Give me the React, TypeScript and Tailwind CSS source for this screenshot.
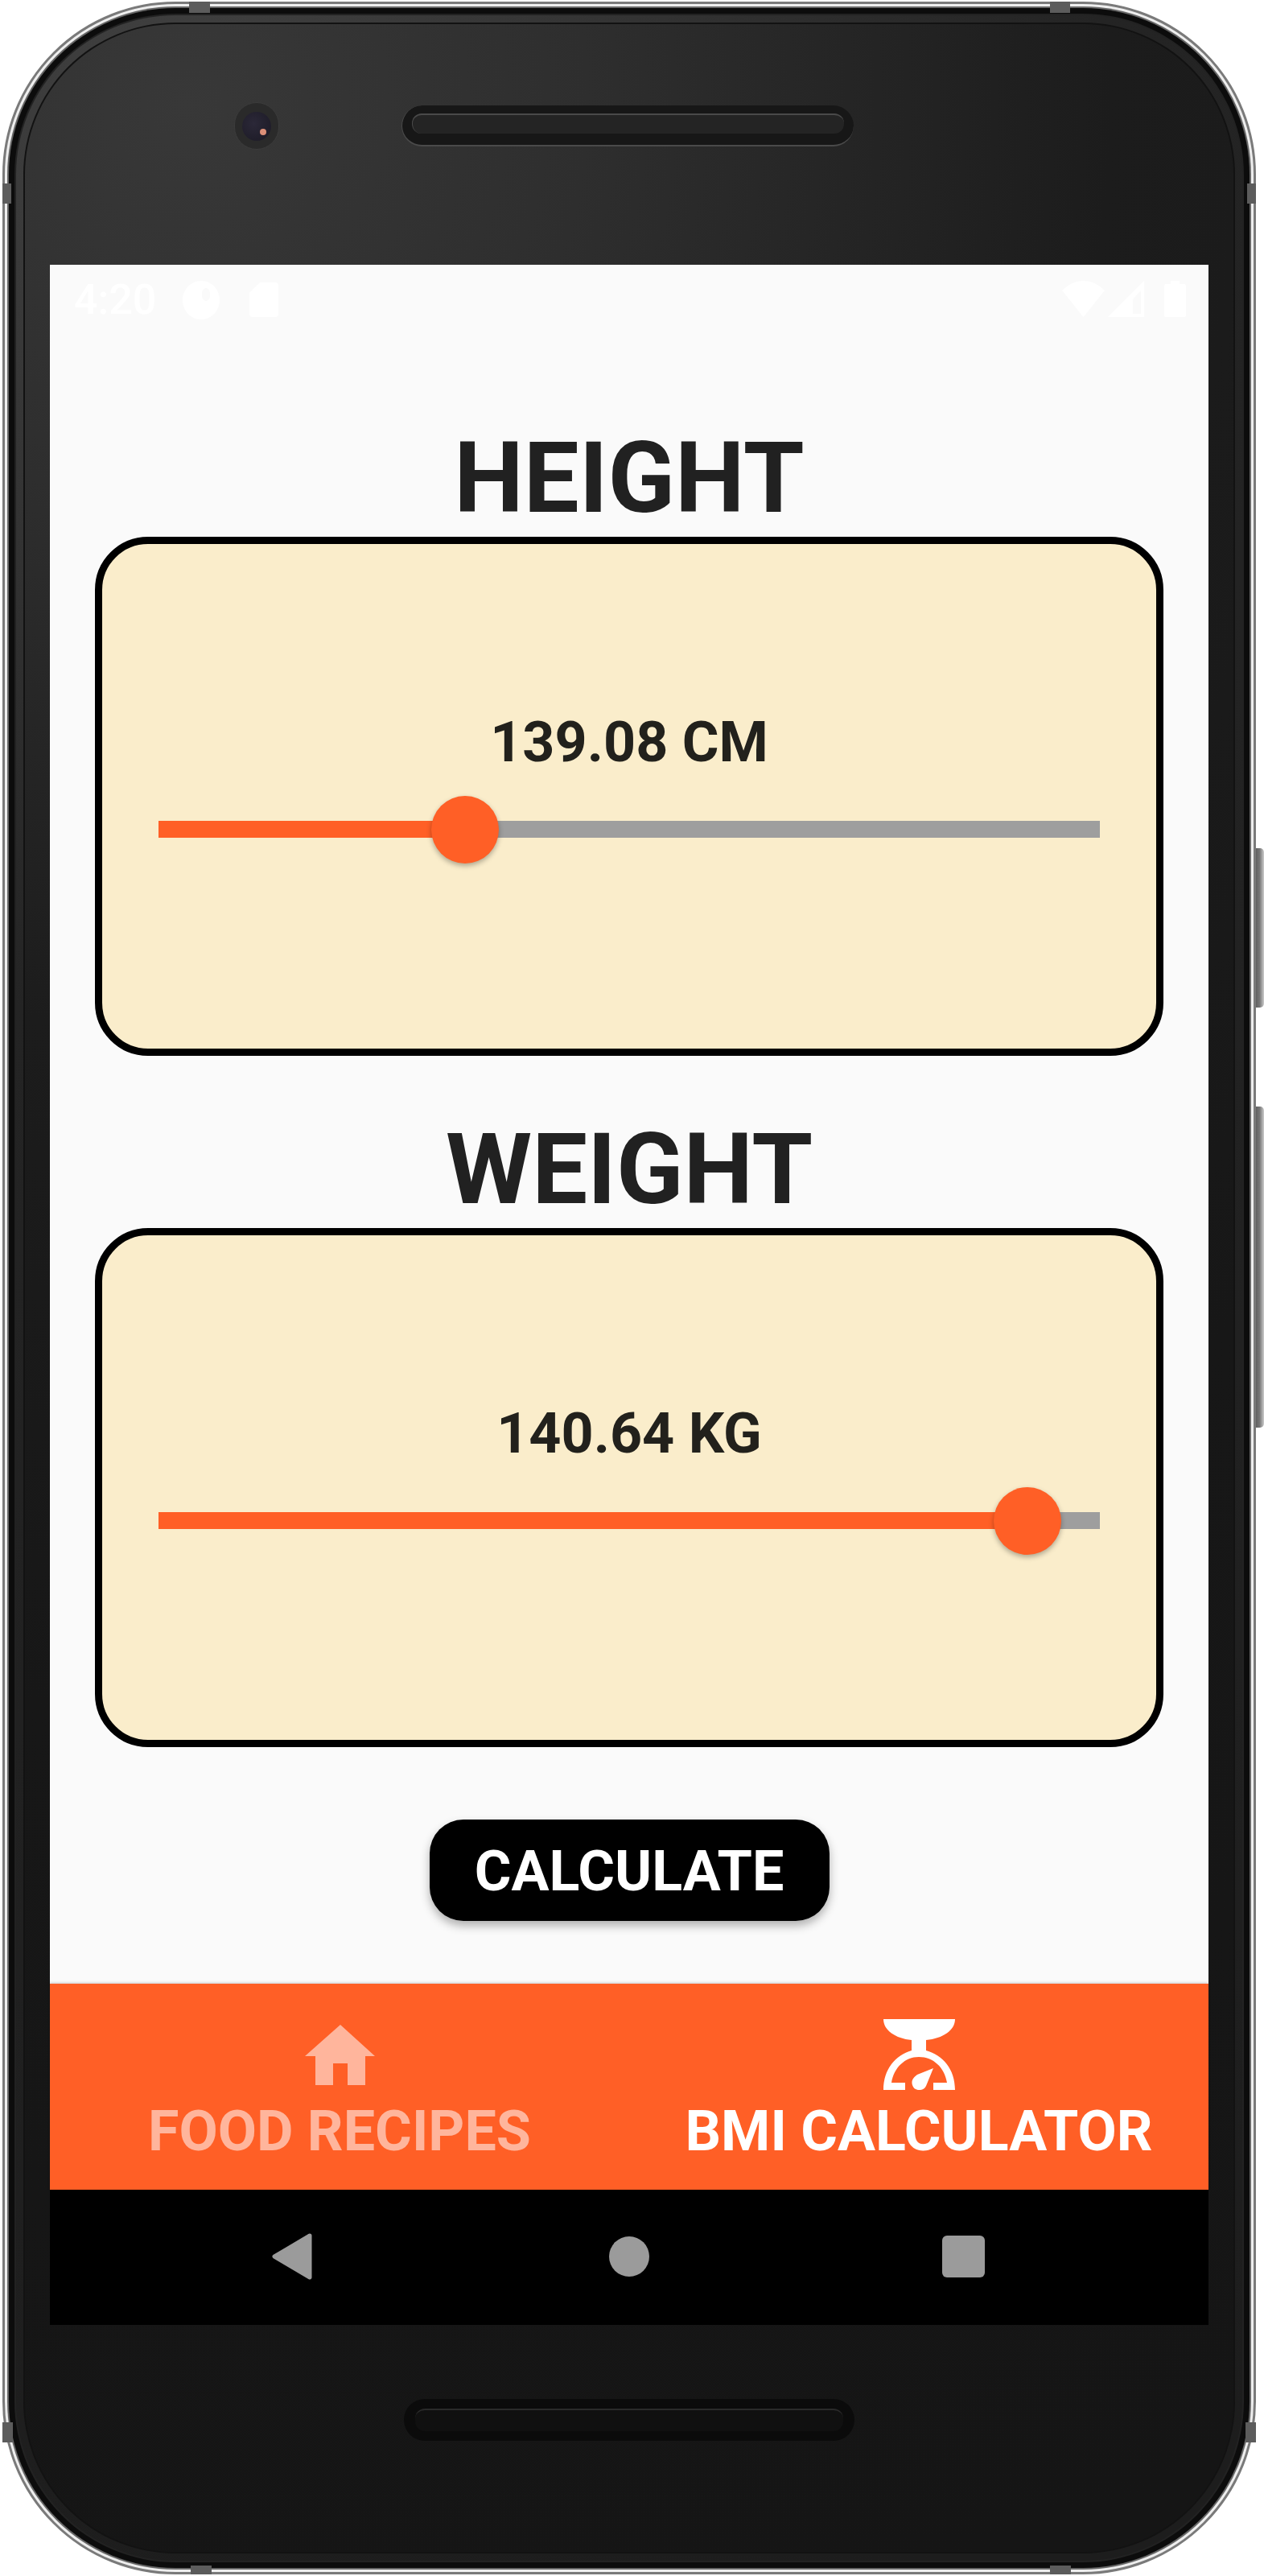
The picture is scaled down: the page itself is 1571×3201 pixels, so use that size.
const roboto = "font-['Roboto',sans-serif]";

function Slider({ percent }: { percent: number }) {
  return (
    <div className="relative mt-[57px] h-[21px] w-full bg-[#9e9e9e]">
      <div className="h-full bg-[#ff5f26]" style={{ width: `${percent}%` }} />
      <div
        className="absolute top-[-31.5px] ml-[-42px] h-[84px] w-[84px] rounded-full bg-[#ff5f26] shadow-[0_3px_6px_rgba(0,0,0,0.3)]"
        style={{ left: `${percent}%` }}
      />
    </div>
  );
}

function MeasureCard(props: { title: string; value: string; percent: number; className?: string }) {
  const { title, value, percent, className } = props;
  return (
    <div className={`flex w-full flex-col items-center ${className ?? ""}`}>
      <h2 className="h-[143px] text-[122.5px] leading-[143px] font-bold text-[#212121]">{title}</h2>
      <div className="mt-px flex h-[645px] w-full flex-col items-center rounded-[66px] border-[9px] border-black bg-[#faedcb] px-[70px] pt-[205px]">
        <div className="text-[70px] leading-[82px] font-bold text-[#22211c]">{value}</div>
        <Slider percent={percent} />
      </div>
    </div>
  );
}

function StatusBar() {
  return (
    <div className="flex h-[84px] shrink-0 items-center pr-[28px] pl-[30px] text-white">
      <span className="mt-[3px] w-[92px] text-[52px] leading-[60px] font-medium">4:20</span>
      <svg className="mt-[3px] ml-[43px]" width="46" height="48" viewBox="0 0 46 48" fill="currentColor">
        <path fillRule="evenodd" d="M23 0c13 0 23 11 23 24S36 48 23 48 0 37 0 24 10 0 23 0Zm6 9a5 6 0 0 0-5 6v4a5 6 0 0 0 10 0v-4a5 6 0 0 0-5-6Z" />
      </svg>
      <svg className="mt-[3px] ml-[37px]" width="36" height="43" viewBox="0 0 36 43" fill="currentColor">
        <path d="M13 0h19a4 4 0 0 1 4 4v35a4 4 0 0 1-4 4H4a4 4 0 0 1-4-4V13Z" />
      </svg>
      <div className="ml-auto flex items-center">
        <svg width="53" height="45" viewBox="0 0 53 45" fill="currentColor">
          <path d="M26.5 45 0 12C8 4 17 0 26.5 0S45 4 53 12Z" />
        </svg>
        <svg className="ml-[4px]" width="45" height="45" viewBox="0 0 45 45" fill="currentColor">
          <path fillRule="evenodd" d="M45 0v45H0Zm-4 12L31 23v18h10Z" />
        </svg>
        <svg className="ml-[25px]" width="27" height="45" viewBox="0 0 27 45" fill="currentColor">
          <path d="M8 0h11v4h6a2 2 0 0 1 2 2v37a2 2 0 0 1-2 2H2a2 2 0 0 1-2-2V6a2 2 0 0 1 2-2h6Z" />
        </svg>
      </div>
    </div>
  );
}

function HomeIcon() {
  return (
    <svg width="87" height="75" viewBox="0 0 87 75" fill="currentColor">
      <path d="M44 0 87 39H75V75H53V48H35V75H13V39H0Z" />
    </svg>
  );
}

function ScaleIcon() {
  return (
    <svg width="89" height="88" viewBox="0 0 89 88" fill="currentColor">
      <path d="M0 0H89C89 14 74 24 53 26V39C74 45 89 62 89 88H62V79H79C76 60 62 47 44 47 27 47 13 60 10 79H27V88H0C0 62 15 45 35 39V26C15 24 0 14 0 0Z" />
      <path d="M62 61 53 83C50 90 38 90 36 82 34 76 38 72 42 69Z" />
    </svg>
  );
}

function TabItem(props: { label: string; active?: boolean; children: React.ReactNode }) {
  const { label, active, children } = props;
  return (
    <div className={`flex flex-1 flex-col items-center pt-[44px] ${active ? "text-white" : "text-[#ffb59c]"}`}>
      <div className="flex h-[88px] items-center justify-center">{children}</div>
      <span className="mt-[10px] text-[70px] leading-[82px] font-bold whitespace-nowrap">{label}</span>
    </div>
  );
}

function NavBar() {
  return (
    <div className="flex h-[168px] shrink-0 items-center bg-black pb-[2px] pl-[274px]">
      <svg width="56" height="58" viewBox="0 0 56 58" fill="#9b9b9b">
        <path d="M49 3 5 29 49 55Z" stroke="#9b9b9b" strokeWidth="5" strokeLinejoin="round" />
      </svg>
      <div className="ml-[365px] h-[50px] w-[50px] rounded-full bg-[#9b9b9b]" />
      <div className="ml-[364px] h-[52px] w-[53px] rounded-[6px] bg-[#9b9b9b]" />
    </div>
  );
}

function Speaker({ bottom }: { bottom?: boolean }) {
  if (bottom) {
    return (
      <div className="flex h-[52px] w-[560px] items-center rounded-[26px] bg-[#0b0b0b] px-[14px]">
        <div className="h-[28px] w-full rounded-[12px] border-t-2 border-[#2a2a2a] bg-[#101010]" />
      </div>
    );
  }
  return (
    <div className="flex h-[51px] w-[562px] items-center rounded-[26px] border-b-2 border-l border-[#4a4a4a] bg-[#171717] px-[12px] pb-[4px]">
      <div className="h-[25px] w-full rounded-[12px] border-t-2 border-l border-[#4a4a4a] bg-[#242424]" />
    </div>
  );
}

function Camera() {
  return (
    <div className="relative flex h-[59px] w-[56px] shrink-0 items-center justify-center rounded-full border border-[#3c3c3c] bg-[#2a2a2a]">
      <div className="relative h-[36px] w-[36px] rounded-full bg-[radial-gradient(circle_at_40%_40%,#2b2838,#1b1924)]">
        <div className="absolute top-[21px] left-[22px] h-[8px] w-[8px] rounded-full bg-[#dc8f78]" />
      </div>
    </div>
  );
}

const rimBands = [
  "top-[-3px] left-[229px] h-[14px] w-[26px]",
  "top-[-3px] right-[228px] h-[14px] w-[25px]",
  "top-[223px] left-[-3px] h-[25px] w-[11px]",
  "top-[223px] right-[-3px] h-[25px] w-[11px]",
  "bottom-[-3px] left-[231px] h-[11px] w-[26px]",
  "bottom-[-3px] right-[227px] h-[11px] w-[26px]",
  "bottom-[161px] left-[-3px] h-[25px] w-[13px]",
  "bottom-[161px] right-[-3px] h-[25px] w-[13px]",
];

export default function App() {
  return (
    <div className={`relative h-[3201px] w-[1571px] overflow-hidden bg-white ${roboto}`}>
      {/* side buttons */}
      <div className="absolute top-[1054px] right-0 h-[198px] w-[12px] rounded-r-[5px] bg-[linear-gradient(90deg,#555,#777_55%,#ccc)]" />
      <div className="absolute top-[1375px] right-0 h-[399px] w-[12px] rounded-r-[5px] bg-[linear-gradient(90deg,#555,#777_55%,#ccc)]" />

      <div className="relative mt-[2px] ml-[3px] h-[3197px] w-[1558px] rounded-[215px] border-[3px] border-[#7a7a7a] bg-[#eeeeee] p-[3px]">
        {rimBands.map((band) => (
          <div key={band} className={`absolute z-10 bg-[#5c5c5c] ${band}`} />
        ))}
        <div className="h-full rounded-[209px] bg-[#666666] p-[2px]">
          <div className="h-full rounded-[207px] bg-[#0c0c0c] p-[7px]">
            <div className="h-full rounded-[200px] bg-[#222222] p-[2px]">
              <div className="h-full rounded-[198px] bg-[radial-gradient(circle_at_200px_100px,#404040_0px,#353535_500px,#242424_1150px,#1d1d1d_3200px)] p-[9px]">
                <div className="h-full rounded-[189px] bg-[#121212] p-[2px]">
                  <div className="flex h-full flex-col rounded-[187px] bg-[radial-gradient(circle_at_200px_100px,#383838_0px,#2e2e2e_500px,#1c1c1c_1150px,#171717_2000px,#151515_3200px)] px-[31px]">
                    <div className="flex h-[299px] shrink-0 items-center gap-[152px] pb-[46px] pl-[229px]">
                      <Camera />
                      <Speaker />
                    </div>

                    <div className="flex h-[2560px] shrink-0 flex-col bg-[#fafafa]">
                      <StatusBar />
                      <div className="flex flex-1 flex-col items-center px-[56px]">
                        <MeasureCard className="mt-[110px]" title="HEIGHT" value="139.08 CM" percent={32.56} />
                        <MeasureCard className="mt-[70px]" title="WEIGHT" value="140.64 KG" percent={92.3} />
                        <button className="mt-[90px] flex h-[126px] w-[497px] items-center justify-center rounded-[42px] bg-black pt-[2px] text-[70px] font-bold text-white shadow-[0_6px_12px_rgba(0,0,0,0.3)]">
                          CALCULATE
                        </button>
                      </div>
                      <div className="flex h-[256px] shrink-0 bg-[#ff5f26] shadow-[0_-1px_3px_rgba(0,0,0,0.2)]">
                        <TabItem label="FOOD RECIPES">
                          <HomeIcon />
                        </TabItem>
                        <TabItem label="BMI CALCULATOR" active>
                          <ScaleIcon />
                        </TabItem>
                      </div>
                      <NavBar />
                    </div>

                    <div className="flex flex-1 items-center justify-center pb-[47px]">
                      <Speaker bottom />
                    </div>
                  </div>
                </div>
              </div>
            </div>
          </div>
        </div>
      </div>
    </div>
  );
}
